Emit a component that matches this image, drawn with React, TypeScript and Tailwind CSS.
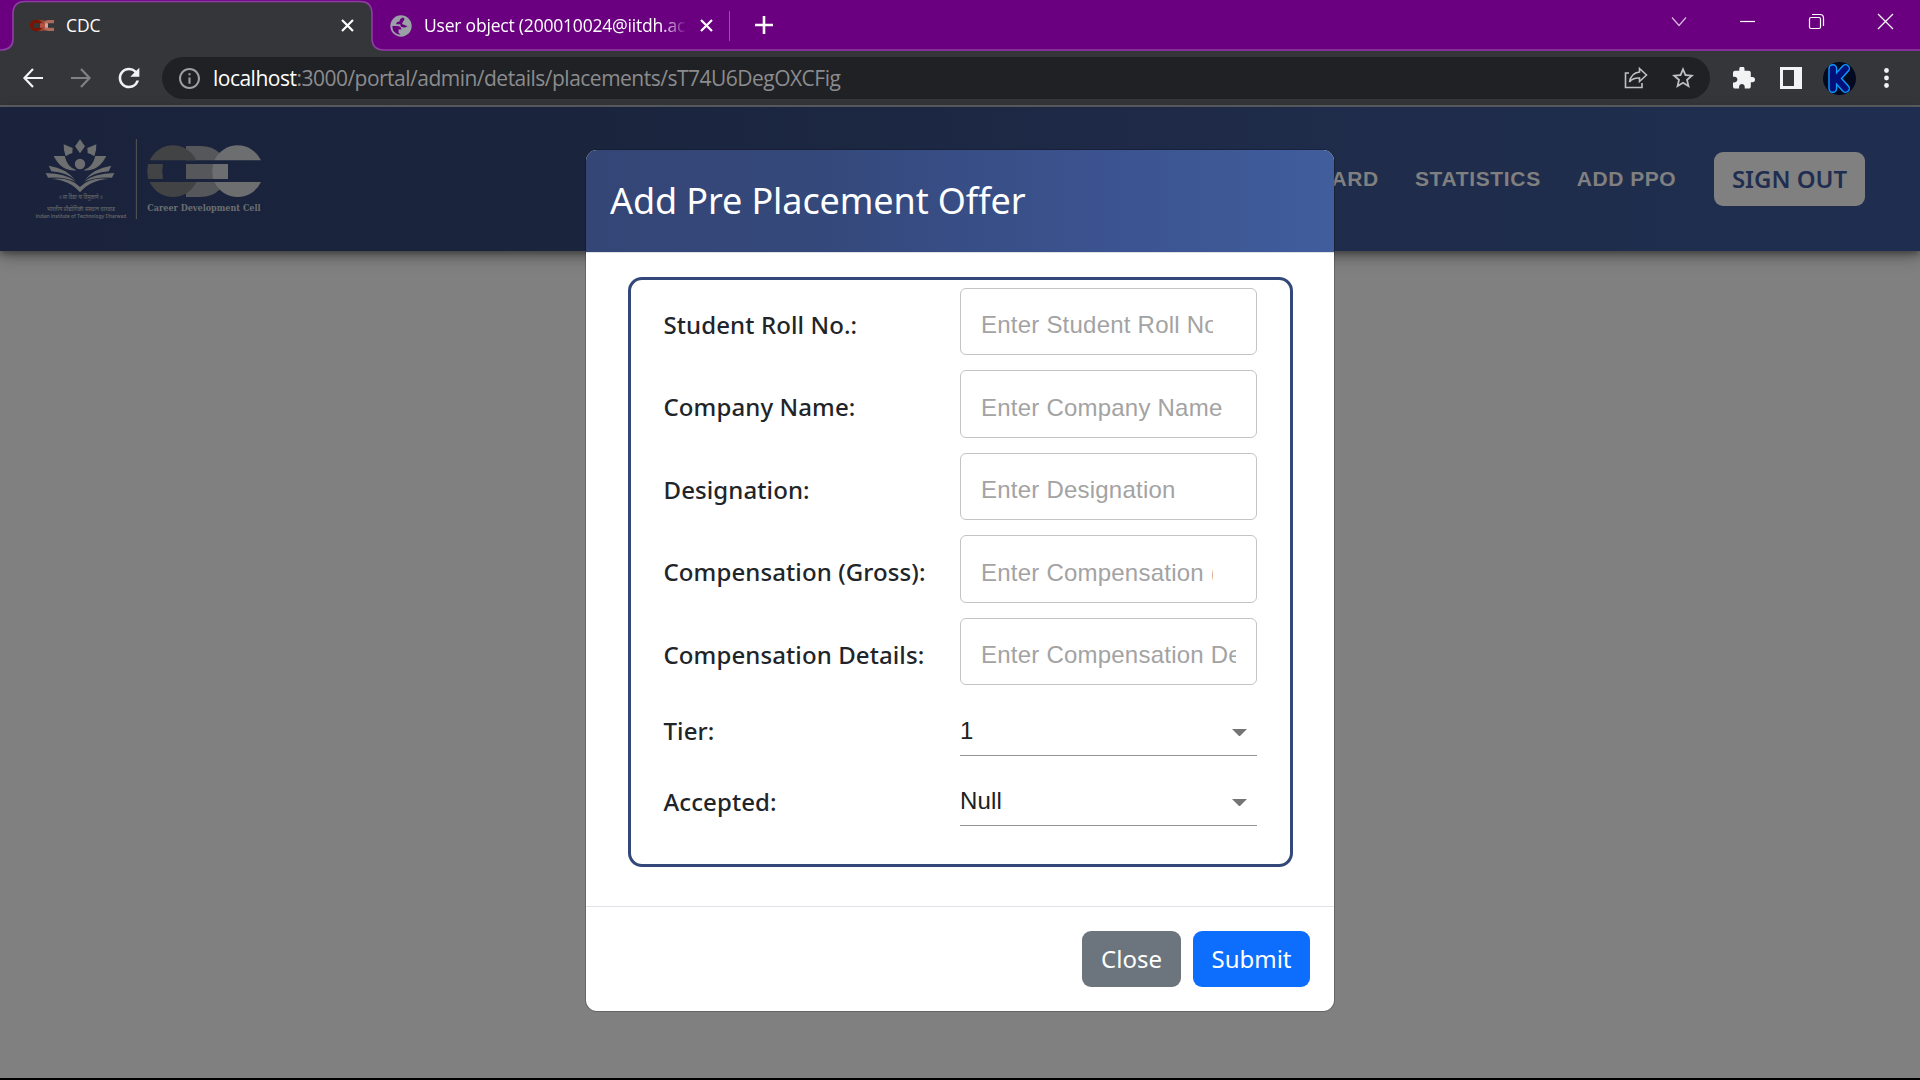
import React from "react";

const ui = "font-['Open_Sans','Noto_Sans',sans-serif]";

function TabStrip() {
  return (
    <div className="relative flex h-[51px] shrink-0 bg-[#6a0080] text-white">
      <svg className="absolute inset-0" width="1920" height="51" viewBox="0 0 1920 51" fill="none">
        <path d="M0 50.5H3Q13 49 13 39V14Q13 1.5 25 1.5H360Q372 1.5 372 14V38Q372 50 384 50.5V52H0Z" fill="#35363a" />
        <path d="M0 50H2Q13 49 13 39V14Q13 1.5 25 1.5H360Q372 1.5 372 14V38Q372 50 384 50H1920" stroke="#8f3fa3" strokeWidth="1.6" />
      </svg>
      <div className="relative flex h-[51px] w-[372px] items-center pl-[30px]">
        <svg width="25" height="13" viewBox="0 0 25 13">
          <path d="M8 1H13Q16 1 17 3.500V4H8ZM8 12H13Q16 12 17 9.500V9H8Z" fill="#93402f" />
          <path d="M0.500 4.200Q2.500 0.800 6.500 0.800Q10 0.800 12 4.200ZM0.500 8.800Q2.500 12.200 6.500 12.200Q10 12.200 12 8.800ZM0 4H4V9H0Z" fill="#7a1400" />
          <path d="M13 4.200Q15 1 19 1H24V4.200ZM13 8.800Q15 12 19 12H24V8.800Z" fill="#b06a5c" />
          <rect x="10" y="4.200" width="7.500" height="4.600" fill="#b5523f" />
          <rect x="15" y="4.200" width="3" height="4.600" fill="#d6a196" />
        </svg>
        <span className={"ml-[11px] text-[17.500px] leading-none tracking-[-0.1px] " + ui}>CDC</span>
        <svg className="ml-auto mr-[18px]" width="13" height="13" viewBox="0 0 13 13" stroke="#fff" strokeWidth="2.200">
          <path d="M1 1L12 12M12 1L1 12" />
        </svg>
      </div>
      <div className="relative flex h-[51px] w-[358px] items-center pl-[18px]">
        <svg width="22" height="22" viewBox="0 0 22 22">
          <circle cx="11" cy="11" r="10.700" fill="#9aa0a6" />
          <path d="M2.300 11H7Q11.500 11 11.300 14.500H8.500V17.500L10.500 19.700Q2.500 19 2.300 11Z" fill="#6a0080" />
          <path d="M13 2.500Q9.500 3.500 9.500 6.500Q6 6.500 6.300 9.300H10.300Q10.300 12.500 14 12.500Q16.500 12.500 17 11.300H19.500Q20.500 5 13 2.500Z" fill="#6a0080" />
          <path d="M13.500 2Q15.500 4.500 13 6.500L12 9L17 11L20 12Q21.500 4.500 13.500 2Z" fill="#9aa0a6" />
        </svg>
        <span className={"mb-[1px] ml-[12px] h-[26px] w-[263px] overflow-hidden whitespace-nowrap text-[17.500px] leading-[26px] tracking-[-0.2px] [mask-image:linear-gradient(to_right,#000_90%,transparent)] " + ui}>
          User object (200010024@iitdh.ac.in
        </span>
        <svg className="ml-[13px]" width="13" height="13" viewBox="0 0 13 13" stroke="#fff" strokeWidth="2.200">
          <path d="M1 1L12 12M12 1L1 12" />
        </svg>
        <span className="ml-auto h-[30px] w-[1.500px] bg-[#a04db3]" />
      </div>
      <svg className="relative ml-[24.500px] mt-[16px]" width="18" height="18" viewBox="0 0 18 18" stroke="#fff" strokeWidth="2.600">
        <path d="M9 0V18M0 9H18" />
      </svg>
      <svg className="relative ml-auto mr-[26px]" width="223" height="51" viewBox="0 0 223 51" fill="none" stroke="#fff" strokeWidth="1.200">
        <path d="M1 17.500L8 25.500L15 17.500" stroke="#d9b8e0" />
        <path d="M69 21.500H84" />
        <rect x="138.500" y="17.500" width="11" height="11" rx="1.500" />
        <path d="M141 14.500H149Q152.500 14.500 152.500 18V26" />
        <path d="M207 14L222 29M222 14L207 29" />
      </svg>
    </div>
  );
}

function Toolbar() {
  return (
    <div className="flex h-[56px] shrink-0 items-center border-b-2 border-[#5f6064] bg-[#35363a] pl-[22px]">
      <svg width="22" height="20" viewBox="0 0 22 20" fill="none" stroke="#f1f3f4" strokeWidth="2.200">
        <path d="M11 1L2.500 10L11 19M2.500 10H21" />
      </svg>
      <svg className="ml-[26px]" width="22" height="20" viewBox="0 0 22 20" fill="none" stroke="#808185" strokeWidth="2.200">
        <path d="M11 1L19.500 10L11 19M19.500 10H1" />
      </svg>
      <svg className="ml-[26px]" width="22" height="22" viewBox="3.500 3.500 17 17" fill="#f1f3f4">
        <path d="M17.650 6.350A7.958 7.958 0 0 0 12 4c-4.420 0-7.990 3.580-7.990 8s3.570 8 7.990 8c3.730 0 6.840-2.550 7.730-6h-2.080A5.990 5.990 0 0 1 12 18c-3.310 0-6-2.690-6-6s2.690-6 6-6c1.660 0 3.140.690 4.220 1.780L13 11h7V4z" />
      </svg>
      <div className="ml-[22px] flex h-[42px] w-[1548px] items-center rounded-full bg-[#202124] pl-[17px] pr-[16px]">
        <svg width="21" height="21" viewBox="2 2 20 20" fill="#9aa0a6">
          <path d="M11 7h2v2h-2zm0 4h2v6h-2zm1-9C6.480 2 2 6.480 2 12s4.480 10 10 10 10-4.480 10-10S17.520 2 12 2zm0 18c-4.410 0-8-3.590-8-8s3.590-8 8-8 8 3.590 8 8-3.590 8-8 8z" />
        </svg>
        <span className={"ml-[13px] whitespace-nowrap text-[21px] leading-none tracking-[-0.510px] text-[#8b8c8f] " + ui}>
          <span className="text-white">localhost</span>:3000/portal/admin/details/placements/sT74U6DegOXCFig
        </span>
        <svg className="ml-auto" width="24" height="22" viewBox="0 0 24 22" fill="none" stroke="#bdc1c6" strokeWidth="1.600">
          <path d="M5 6H1.500V20.500H18V16" />
          <path d="M15.500 1.500L22.500 8L15.500 14.500V11Q9 10.500 5.500 15Q7 6 15.500 5Z" />
        </svg>
        <svg className="ml-[24px]" width="22" height="22" viewBox="2 2 20 20" fill="#bdc1c6">
          <path d="M22 9.240l-7.190-.620L12 2 9.190 8.630 2 9.240l5.460 4.730L5.820 21 12 17.270 18.180 21l-1.630-7.030zM12 15.400l-3.760 2.270 1-4.280-3.320-2.880 4.380-.380L12 6.100l1.710 4.040 4.380.380-3.320 2.880 1 4.280z" />
        </svg>
      </div>
      <svg className="ml-[22.500px]" width="22" height="22" viewBox="2 1.500 21 21" fill="#f1f3f4">
        <path d="M20.500 11H19V7c0-1.100-.900-2-2-2h-4V3.500a2.500 2.500 0 0 0-5 0V5H4c-1.100 0-1.990.900-1.990 2v3.800H3.500c1.490 0 2.700 1.210 2.700 2.700s-1.210 2.700-2.700 2.700H2V20c0 1.100.900 2 2 2h3.800v-1.500c0-1.490 1.210-2.700 2.700-2.700 1.490 0 2.700 1.210 2.700 2.700V22H17c1.100 0 2-.900 2-2v-4h1.500a2.500 2.500 0 0 0 0-5z" />
      </svg>
      <div className="ml-[25.500px] flex h-[22px] w-[22px] border-[3px] border-r-[8px] border-[#f1f3f4]" />
      <svg className="ml-[21px]" width="33" height="33" viewBox="0 0 33 33" fill="none" strokeLinecap="round" strokeLinejoin="round">
        <circle cx="16.500" cy="16.500" r="16.500" fill="#03091f" />
        <path d="M9.800 6.500V26.500M22.500 6.500L13.500 16.500L22.500 26.500" stroke="#0a9bff" strokeWidth="9" />
        <path d="M9.800 6.500V26.500M22.500 6.500L13.500 16.500L22.500 26.500" stroke="#04107a" strokeWidth="6.200" />
      </svg>
      <svg className="ml-[28px]" width="5" height="20" viewBox="0 0 5 20" fill="#f1f3f4">
        <circle cx="2.500" cy="2.500" r="2.400" /><circle cx="2.500" cy="10" r="2.400" /><circle cx="2.500" cy="17.500" r="2.400" />
      </svg>
    </div>
  );
}

function Logo() {
  return (
    <svg className="ml-[20px] mt-[18px]" width="260" height="110" viewBox="0 0 780 330" fill="#6c6e6f">
      <path d="M180 43L195 64L180 85L165 64Z" />
      <path d="M131 58L158 69L157 84Q145 88 137 94Q130 76 131 58Z" />
      <path d="M229 58L202 69L203 84Q215 88 223 94Q230 76 229 58Z" />
      <circle cx="180" cy="117" r="15.500" />
      <path d="M101 93H134Q142 128 170 136Q124 140 101 93Z" />
      <path d="M259 93H226Q218 128 190 136Q236 140 259 93Z" />
      <path d="M86 122Q140 130 166 166Q140 142 94 139Z" />
      <path d="M274 122Q220 130 194 166Q220 142 266 139Z" />
      <path d="M77 144Q140 146 168 170Q130 154 84 158Z" />
      <path d="M283 144Q220 146 192 170Q230 154 276 158Z" />
      <path d="M92 162Q150 154 180 186Q210 154 268 162Q212 164 180 202Q148 164 92 162Z" />
      <text x="116" y="223" fontSize="17" textLength="132" lengthAdjust="spacingAndGlyphs" fontFamily="'Noto Sans Devanagari','Noto Sans',sans-serif">॥ सा विद्या या विमुक्तये ॥</text>
      <text x="80" y="257" fontSize="17" textLength="205" lengthAdjust="spacingAndGlyphs" fontFamily="'Noto Sans Devanagari','Noto Sans',sans-serif">भारतीय प्रौद्योगिकी संस्थान धारवाड</text>
      <text x="47" y="278" fontSize="15" textLength="272" lengthAdjust="spacingAndGlyphs" fontFamily="Inter,sans-serif" fontWeight="500">Indian Institute of Technology Dharwad</text>
      <rect x="347.500" y="42" width="3.500" height="240" fill="#4e4f50" />
      <g fill="#55575a">
        <path d="M498 63H540Q578 63 600 85L585 106H498Z" />
        <path d="M498 117H580V162H498Z" />
        <path d="M498 216H540Q578 216 600 193L585 171H498Z" />
      </g>
      <g fill="#424344">
        <path d="M389 106A77 77 0 0 1 529 106Z" />
        <path d="M384 117H429Q424 139 429 162H384Q379 139 384 117Z" />
        <path d="M389 171A77 77 0 0 0 529 171Z" />
      </g>
      <g fill="#6c6e6f">
        <path d="M583 106A77 77 0 0 1 723 106Z" />
        <path d="M579 117H624V162H579Q574 139 579 117Z" />
        <path d="M583 171A77 77 0 0 0 723 171Z" />
      </g>
      <text x="382" y="259" fontSize="29" textLength="340" lengthAdjust="spacingAndGlyphs" fontFamily="'DejaVu Serif',serif" fontWeight="700">Career Development Cell</text>
    </svg>
  );
}

function Navbar() {
  return (
    <header className="relative flex h-[144px] shrink-0 items-start bg-[linear-gradient(90deg,#1a233b_0%,#1a243d_30%,#1f2c4b_72%,#1f2e50_100%)] shadow-[0_3px_6px_rgba(0,0,0,0.3),0_6px_15px_rgba(0,0,0,0.3)]">
      <Logo />
      <nav className="ml-auto mr-[55px] mt-[45px] flex h-[54px] items-center font-['Liberation_Sans',sans-serif] text-[21px] font-bold leading-none text-[#808080]">
        <span className="mb-[2px] mr-[36px] tracking-[0.65px]">DASHBOARD</span>
        <span className="mb-[2px] mr-[36px] tracking-[0.65px]">STATISTICS</span>
        <span className="mb-[2px] mr-[38px] tracking-[0.5px]">ADD PPO</span>
        <span className="flex h-[54px] w-[151px] items-center justify-center rounded-[9px] bg-[#808080] font-['Noto_Sans',sans-serif] text-[24px] font-semibold text-[#1f2e50]">
          SIGN OUT
        </span>
      </nav>
    </header>
  );
}

const fields = [
  { label: "Student Roll No.:", hint: "Enter Student Roll No.", narrow: true },
  { label: "Company Name:", hint: "Enter Company Name", narrow: false },
  { label: "Designation:", hint: "Enter Designation", narrow: false },
  { label: "Compensation (Gross):", hint: "Enter Compensation (Gross)", narrow: true },
  { label: "Compensation Details:", hint: "Enter Compensation Details", narrow: false },
];

const labelClass = "-ml-[0.500px] w-[296.500px] shrink-0 whitespace-nowrap text-[24px] font-medium leading-[36px] tracking-[0.1px] text-[#212529]";

function Select({ label, value, last }: { label: string; value: string; last?: boolean }) {
  return (
    <div className={(last ? "mt-[22px]" : "mt-[23px]") + " flex h-[48px] items-start"}>
      <span className={labelClass + (last ? " pt-[6px]" : " pt-[5px]")}>{label}</span>
      <div className="flex h-[48px] w-[297px] items-start border-b border-[#949494] pt-[5px] font-['Liberation_Sans',sans-serif] text-[24px] leading-[35px] tracking-[0.2px] text-[#212121]">
        <span>{value}</span>
        <svg className="ml-auto mr-[10.500px] mt-[16px]" width="15" height="7.500" viewBox="0 0 10 5" fill="#757575">
          <path d="M0 0L5 5L10 0Z" />
        </svg>
      </div>
    </div>
  );
}

function Modal() {
  return (
    <div className="absolute left-[586px] top-[150px] flex h-[861px] w-[748px] flex-col overflow-hidden rounded-[11px] bg-white font-['Noto_Sans',sans-serif] shadow-[0_0_0_1px_rgba(0,0,0,0.2)]">
      <div className="flex h-[103px] shrink-0 items-center border-b border-[#dee2e6] bg-[linear-gradient(90deg,#344676_0%,#34487a_30%,#3b5390_70%,#415d9c_100%)] pl-[24px]">
        <h1 className="text-[36px] leading-[54px] tracking-[-0.1px] text-white">Add Pre Placement Offer</h1>
      </div>
      <div className="ml-[42px] mt-[24px] h-[590px] w-[665px] rounded-[14px] border-[3px] border-[#334879] pl-[33px] pt-[8px]">
        <div className="flex flex-col gap-[15px]">
          {fields.map((f) => (
            <div key={f.label} className="flex h-[67.400px] items-center">
              <span className={labelClass + " pt-[6.800px]"}>{f.label}</span>
              <div className="flex h-[67.400px] w-[297px] items-center rounded-[6px] border border-[#c4c4c4] px-[20px] pt-[7.400px]">
                <span
                  className={
                    "overflow-hidden whitespace-nowrap font-['Liberation_Sans',sans-serif] text-[24px] leading-[34px] tracking-[0.225px] text-[#a3a3a3] " +
                    (f.narrow ? "w-[232px]" : "w-[255px]")
                  }
                >
                  {f.hint}
                </span>
              </div>
            </div>
          ))}
        </div>
        <Select label="Tier:" value="1" />
        <Select label="Accepted:" value="Null" last />
      </div>
      <div className="mt-auto flex h-[105px] shrink-0 items-center justify-end gap-[12px] border-t border-[#dee2e6] pr-[24px] text-[24px] leading-none text-white">
        <button className="h-[56px] w-[99px] rounded-[9px] bg-[#6c757d]">Close</button>
        <button className="h-[56px] w-[117px] rounded-[9px] bg-[#0d6efd]">Submit</button>
      </div>
    </div>
  );
}

export default function App() {
  return (
    <div className="relative flex h-[1080px] w-[1920px] flex-col overflow-hidden border-b-2 border-black bg-[#808080]">
      <TabStrip />
      <Toolbar />
      <Navbar />
      <Modal />
    </div>
  );
}
